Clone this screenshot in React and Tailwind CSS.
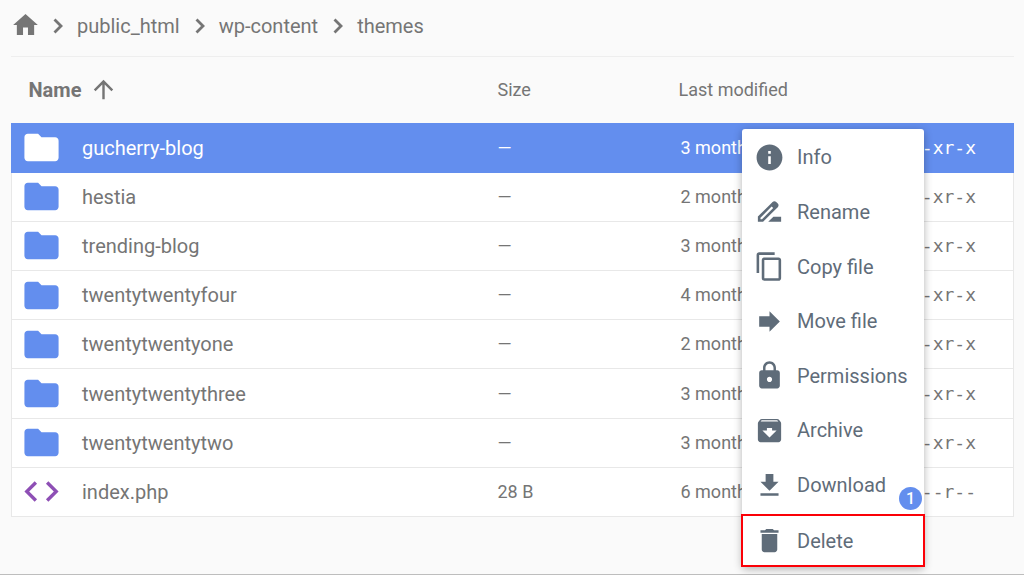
import React, { useState } from 'react';

const ICONS = {
  arrowUp: 'M4 12l1.41 1.41L11 7.83V20h2V7.83l5.58 5.59L20 12l-8-8-8 8z',
  folder: 'M10 4H4c-1.1 0-1.99.9-1.99 2L2 18c0 1.1.9 2 2 2h16c1.1 0 2-.9 2-2V8c0-1.1-.9-2-2-2h-8l-2-2z',
  code: 'M9.4 16.6L4.8 12l4.6-4.6L8 6l-6 6 6 6 1.4-1.4zm5.2 0l4.6-4.6-4.6-4.6L16 6l6 6-6 6-1.4-1.4z',
  info: 'M12 2C6.48 2 2 6.48 2 12s4.48 10 10 10 10-4.48 10-10S17.52 2 12 2zm1 15h-2v-6h2v6zm0-8h-2V7h2v2z',
  rename:
    'M18.41 5.8L17.2 4.59c-.78-.78-2.05-.78-2.83 0l-2.68 2.68L3 15.96V20h4.04l8.74-8.74 2.63-2.63c.79-.78.79-2.05 0-2.83zM6.21 18H5v-1.21l8.66-8.66 1.21 1.21L6.21 18zM11 20l4-4h6v4H11z',
  copy: 'M16 1H4c-1.1 0-2 .9-2 2v14h2V3h12V1zm3 4H8c-1.1 0-2 .9-2 2v14c0 1.1.9 2 2 2h11c1.1 0 2-.9 2-2V7c0-1.1-.9-2-2-2zm0 16H8V7h11v14z',
  move: 'M12 8V4l8 8-8 8v-4H4V8z',
  lock: 'M18 8h-1V6c0-2.76-2.24-5-5-5S7 3.24 7 6v2H6c-1.1 0-2 .9-2 2v10c0 1.1.9 2 2 2h12c1.1 0 2-.9 2-2V10c0-1.1-.9-2-2-2zm-6 9c-1.1 0-2-.9-2-2s.9-2 2-2 2 .9 2 2-.9 2-2 2zm3.1-9H8.9V6c0-1.71 1.39-3.1 3.1-3.1 1.71 0 3.1 1.39 3.1 3.1v2z',
  archive:
    'M20.54 5.23l-1.39-1.68C18.88 3.21 18.47 3 18 3H6c-.47 0-.88.21-1.16.55L3.46 5.23C3.17 5.57 3 6.02 3 6.5V19c0 1.1.9 2 2 2h14c1.1 0 2-.9 2-2V6.5c0-.48-.17-.93-.46-1.27zM12 17.5L6.5 12H10v-2h4v2h3.5L12 17.5zM5.12 5l.81-1h12l.94 1H5.12z',
  download: 'M19 9h-4V3H9v6H5l7 7 7-7zM5 18v2h14v-2H5z',
  trash: 'M6 19c0 1.1.9 2 2 2h8c1.1 0 2-.9 2-2V7H6v12zM19 4h-3.5l-1-1h-5l-1 1H5v2h14V4z',
};

const crumbs = ['public_html', 'wp-content', 'themes'];

const files = [
  { name: 'gucherry-blog', size: '—', modified: '3 months ago', mode: 'drwxr-xr-x' },
  { name: 'hestia', size: '—', modified: '2 months ago', mode: 'drwxr-xr-x' },
  { name: 'trending-blog', size: '—', modified: '3 months ago', mode: 'drwxr-xr-x' },
  { name: 'twentytwentyfour', size: '—', modified: '4 months ago', mode: 'drwxr-xr-x' },
  { name: 'twentytwentyone', size: '—', modified: '2 months ago', mode: 'drwxr-xr-x' },
  { name: 'twentytwentythree', size: '—', modified: '3 months ago', mode: 'drwxr-xr-x' },
  { name: 'twentytwentytwo', size: '—', modified: '3 months ago', mode: 'drwxr-xr-x' },
  { name: 'index.php', size: '28 B', modified: '6 months ago', mode: '-rw-r--r--', isFile: true },
];

const actions = [
  { label: 'Info', icon: 'info' },
  { label: 'Rename', icon: 'rename' },
  { label: 'Copy file', icon: 'copy' },
  { label: 'Move file', icon: 'move' },
  { label: 'Permissions', icon: 'lock' },
  { label: 'Archive', icon: 'archive' },
  { label: 'Download', icon: 'download' },
  { label: 'Delete', icon: 'trash', highlighted: true },
];

const Icon = ({ name, className }) => (
  <svg viewBox="0 0 24 24" fill="currentColor" aria-hidden="true" className={`shrink-0 ${className}`}>
    <path d={ICONS[name]} />
  </svg>
);

const Breadcrumbs = () => (
  <nav className="flex h-[57px] items-center border-b border-[#eeeeee] pb-1 pl-[2px]">
    <a href="#home" aria-label="Home" className="pb-1">
      <svg viewBox="2 3 20 17" fill="currentColor" aria-hidden="true" className="h-[21px] w-[25px] shrink-0">
        <path d="M10 20v-6h4v6h5v-8h3L12 3 2 12h3v8z" />
      </svg>
    </a>
    {crumbs.map((crumb) => (
      <React.Fragment key={crumb}>
        <svg viewBox="0 0 10 16" fill="none" stroke="currentColor" strokeWidth="2.8" aria-hidden="true" className="mr-[14px] ml-[15px] h-4 w-[10px] shrink-0">
          <path d="M1.5 1.5L8 8l-6.5 6.5" />
        </svg>
        <a href={`#${crumb}`}>{crumb}</a>
      </React.Fragment>
    ))}
  </nav>
);

const FileRow = ({ file, selected, onSelect }) => (
  <tr
    onClick={onSelect}
    className={
      selected
        ? 'border border-[#638eee] bg-[#638eee] text-white'
        : 'border border-[#e8e8e8] bg-white'
    }
  >
    <td className="p-0 pl-[9px]">
      <div className="flex items-center gap-5">
        {file.isFile ? (
          <Icon name="code" className="size-[41px] text-[#8e4fb5]" />
        ) : (
          <Icon name="folder" className={selected ? 'size-[41px] text-white' : 'size-[41px] text-[#638eee]'} />
        )}
        {file.name}
      </div>
    </td>
    <td className="p-0 pl-px text-lg">{file.size}</td>
    <td className="p-0 pl-[2px] text-lg">{file.modified}</td>
    <td className="p-0 pr-[37px] text-right font-['DejaVu_Sans_Mono',monospace] text-lg">{file.mode}</td>
  </tr>
);

const ContextMenu = () => (
  <div
    role="menu"
    className="absolute top-[129px] right-[100px] grid h-[438px] w-[182px] auto-rows-fr rounded-[3px] bg-white pt-px text-[#5f6c79] shadow-[0_2px_8px_rgba(0,0,0,0.3)]"
  >
    {actions.map((action) => (
      <button
        key={action.label}
        type="button"
        role="menuitem"
        className={
          action.highlighted
            ? '-mx-px flex h-[53px] items-center gap-3 self-end border-2 border-[#fb0007] pl-[11px]'
            : 'flex items-center gap-3 pl-3'
        }
      >
        <Icon name={action.icon} className="size-[31px]" />
        {action.label}
      </button>
    ))}
    <span className="absolute right-[2px] bottom-[57px] flex size-[23px] items-center justify-center rounded-full bg-[#638eee] text-base font-medium text-white">
      1
    </span>
  </div>
);

const App = () => {
  const [selected, setSelected] = useState('gucherry-blog');

  return (
    <div className="relative min-h-screen border-b border-[#bdbdbd] bg-[#fafafa] pr-[10px] pl-[11px] font-[Roboto,sans-serif] text-xl text-[#757575]">
      <Breadcrumbs />

      <table className="h-[460px] w-full table-fixed border-collapse text-left">
        <thead>
          <tr className="h-[66px] text-lg">
            <th className="p-0 pl-[17px] text-xl font-bold">
              <div className="flex items-center gap-2">
                Name
                <Icon name="arrowUp" className="size-[29px]" />
              </div>
            </th>
            <th className="w-[182px] p-0 pl-px font-normal">Size</th>
            <th className="w-[170px] p-0 font-normal">Last modified</th>
            <td className="w-[165px] p-0" />
          </tr>
        </thead>
        <tbody>
          {files.map((file) => (
            <FileRow
              key={file.name}
              file={file}
              selected={file.name === selected}
              onSelect={() => setSelected(file.name)}
            />
          ))}
        </tbody>
      </table>

      <ContextMenu />
    </div>
  );
};

export default App;
